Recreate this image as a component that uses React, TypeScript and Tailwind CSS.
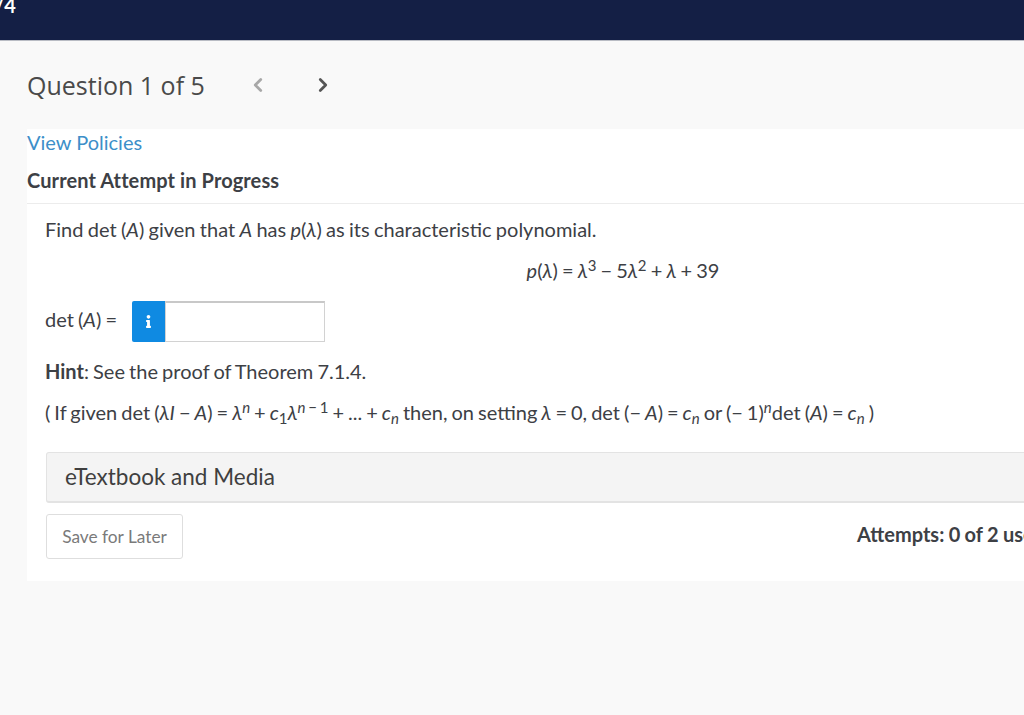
import { ChevronLeft, ChevronRight } from "lucide-react";
import { FaInfo } from "react-icons/fa";

function Var({ children }: { children: React.ReactNode }) {
  return <i className="italic">{children}</i>;
}

function Sup({ children }: { children: React.ReactNode }) {
  return <sup className="text-[15px]">{children}</sup>;
}

function Sub({ children }: { children: React.ReactNode }) {
  return <sub className="text-[15px]">{children}</sub>;
}

export default function App() {
  return (
    <div className="h-[715px] w-[1024px] overflow-hidden bg-[#f9f9f9] font-['Lato',sans-serif] text-[20px] text-[#3d4045]">
      <header className="h-[41px] overflow-hidden border-b border-[#b9bcc4] bg-[#141f45]">
        <div className="-ml-[5px] -mt-[6px] text-[20px] font-bold leading-[22px] text-white">/4</div>
      </header>

      <div className="flex h-[88px] items-center pl-[27px]">
        <h1 className="w-[176px] whitespace-nowrap pt-[2px] font-['Open_Sans',sans-serif] text-[25px] text-[#4a4a4a]">Question 1 of 5</h1>
        <ChevronLeft className="ml-[44px] h-[22px] w-[22px] text-[#a8a8a8]" strokeWidth={3} />
        <ChevronRight className="ml-[43px] h-[22px] w-[22px] text-[#555555]" strokeWidth={3} />
      </div>

      <main className="ml-[27px] h-[452px] w-[1174px] bg-white">
        <a className="block leading-[26px] text-[#3d8fc9]">View Policies</a>
        <div className="mt-[11px] font-bold leading-[28px] tracking-[0.1px]">Current Attempt in Progress</div>
        <div className="mt-[9px] border-t border-[#ececec] pl-[18px] [word-spacing:-1px]">
          <p className="mt-[11px] leading-[28px] [word-spacing:-0.8px]">
            Find det (<Var>A</Var>) given that <Var>A</Var> has <Var>p</Var>(<Var>λ</Var>) as its characteristic polynomial.
          </p>
          <p className="mt-[13px] text-center leading-[28px]">
            <Var>p</Var>(<Var>λ</Var>) = <Var>λ</Var>
            <Sup>3</Sup> − 5<Var>λ</Var>
            <Sup>2</Sup> + <Var>λ</Var> + 39
          </p>

          <div className="mt-[17px] flex items-center">
            <span className="w-[87px] -translate-y-[3px]">
              det (<Var>A</Var>) =
            </span>
            <div className="flex h-[41px] w-[193px]">
              <div className="flex w-[33px] items-center justify-center rounded-l-[2px] bg-[#0f8ae2] text-white">
                <FaInfo className="h-[13px] w-[13px]" />
              </div>
              <div className="flex-1 border border-t-2 border-[#d2d2d2] border-t-[#c8c8c8] bg-white" />
            </div>
          </div>

          <p className="mt-[15px] leading-[28px]">
            <b className="font-bold">Hint</b>: See the proof of Theorem 7.1.4.
          </p>
          <p className="mt-[13px] whitespace-nowrap leading-[28px] [word-spacing:-1.1px]">
            ( If given det (<Var>λI</Var> − <Var>A</Var>) = <Var>λ</Var>
            <Sup><Var>n</Var></Sup> + <Var>c</Var>
            <Sub>1</Sub>
            <Var>λ</Var>
            <Sup><Var>n</Var> − 1</Sup> + ... + <Var>c</Var>
            <Sub><Var>n</Var></Sub> then, on setting <Var>λ</Var> = 0, det (− <Var>A</Var>) = <Var>c</Var>
            <Sub><Var>n</Var></Sub> or (− 1)
            <Sup><Var>n</Var></Sup>det (<Var>A</Var>) = <Var>c</Var>
            <Sub><Var>n</Var></Sub> )
          </p>

          <div className="ml-px mt-[26px] flex h-[51px] items-center rounded-[3px] border border-b-2 border-[#e3e3e3] bg-[#f4f4f4] pl-[18px] text-[22.5px] text-[#3f3f3f] [word-spacing:0]">
            eTextbook and Media
          </div>

          <div className="ml-px mt-[11px] flex items-start justify-between">
            <button className="h-[45px] w-[137px] rounded-[3px] border border-[#dedede] bg-white pt-px text-[17.3px] text-[#7a7a7a] [word-spacing:0]">
              Save for Later
            </button>
            <div className="mt-[6px] w-[344px] font-bold leading-[28px] [word-spacing:-0.5px]">Attempts: 0 of 2 used</div>
          </div>
        </div>
      </main>
    </div>
  );
}
